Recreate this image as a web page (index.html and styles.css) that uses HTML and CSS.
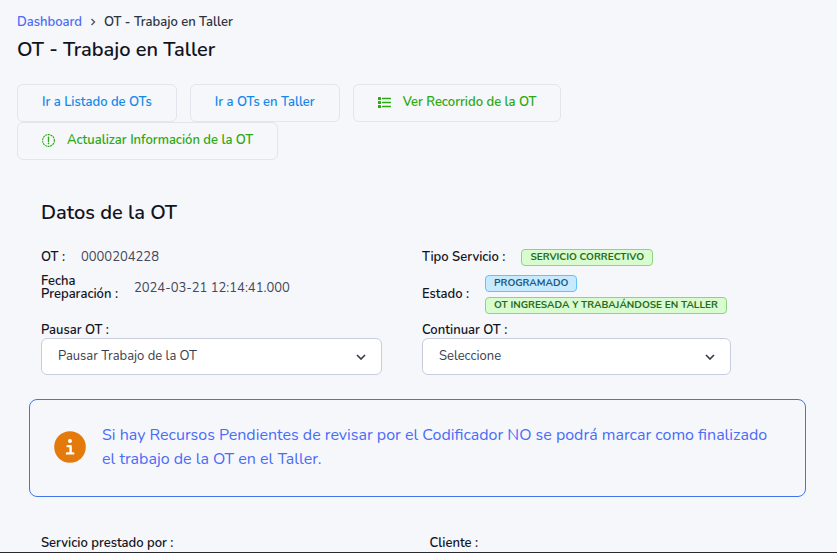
FILE: index.html
```html
<!DOCTYPE html>
<html lang="es">
<head>
    <meta charset="UTF-8">
    <meta name="viewport" content="width=device-width, initial-scale=1.0">
    <title>OT - Trabajo en Taller</title>
    <link rel="stylesheet" href="styles.css">
</head>
<body>
    <header class="page-header">
        <nav class="breadcrumb">
            <a href="#">Dashboard</a>
            <svg class="separator" viewBox="0 0 6 8"><path d="M1.5 1l3 3-3 3"/></svg>
            <span>OT - Trabajo en Taller</span>
        </nav>
        <h1>OT - Trabajo en Taller</h1>
    </header>

    <div class="actions">
        <button type="button" class="btn btn-blue">Ir a Listado de OTs</button>
        <button type="button" class="btn btn-blue">Ir a OTs en Taller</button>
        <button type="button" class="btn btn-green">
            <svg class="btn-icon" viewBox="0 0 13 13">
                <g fill="currentColor">
                    <rect x="0" y="1" width="3" height="3" rx="0.6"/>
                    <rect x="0" y="5" width="3" height="3" rx="0.6"/>
                    <rect x="0" y="9" width="3" height="3" rx="0.6"/>
                    <rect x="4" y="1.7" width="9" height="1.6" rx="0.5"/>
                    <rect x="4" y="5.7" width="9" height="1.6" rx="0.5"/>
                    <rect x="4" y="9.7" width="9" height="1.6" rx="0.5"/>
                </g>
            </svg>
            Ver Recorrido de la OT
        </button>
        <button type="button" class="btn btn-green">
            <svg class="btn-icon" viewBox="0 0 13 13">
                <circle cx="6.5" cy="6.5" r="5.9" fill="none" stroke="currentColor" stroke-width="1.1" stroke-dasharray="2 0.65"/>
                <path d="M6.5 3.2v4.2" fill="none" stroke="currentColor" stroke-width="1.3" stroke-linecap="round"/>
                <circle cx="6.5" cy="9.4" r="0.8" fill="currentColor"/>
            </svg>
            Actualizar Información de la OT
        </button>
    </div>

    <main>
        <section class="details">
            <h2>Datos de la OT</h2>
            <div class="details-grid">
                <dl class="info">
                    <div class="info-row">
                        <dt>OT :</dt>
                        <dd>0000204228</dd>
                    </div>
                    <div class="info-row">
                        <dt>Fecha<br>Preparación :</dt>
                        <dd>2024-03-21 12:14:41.000</dd>
                    </div>
                </dl>
                <dl class="info">
                    <div class="info-row">
                        <dt>Tipo Servicio :</dt>
                        <dd><span class="badge badge-green">SERVICIO CORRECTIVO</span></dd>
                    </div>
                    <div class="info-row">
                        <dt>Estado :</dt>
                        <dd class="badges">
                            <span class="badge badge-blue">PROGRAMADO</span>
                            <span class="badge badge-green">OT INGRESADA Y TRABAJÁNDOSE EN TALLER</span>
                        </dd>
                    </div>
                </dl>
                <div class="field">
                    <label for="pausar">Pausar OT :</label>
                    <div class="select-wrap">
                        <select id="pausar">
                            <option>Pausar Trabajo de la OT</option>
                        </select>
                        <svg class="chevron" viewBox="0 0 10 6"><path d="M1 1l4 4 4-4"/></svg>
                    </div>
                </div>
                <div class="field">
                    <label for="continuar">Continuar OT :</label>
                    <div class="select-wrap">
                        <select id="continuar">
                            <option>Seleccione</option>
                        </select>
                        <svg class="chevron" viewBox="0 0 10 6"><path d="M1 1l4 4 4-4"/></svg>
                    </div>
                </div>
            </div>
        </section>

        <div class="alert" role="alert">
            <svg class="alert-icon" viewBox="0 0 32 32">
                <circle cx="16" cy="16" r="15.8" fill="#e47a0b"/>
                <circle cx="16" cy="10" r="2" fill="#fff"/>
                <path d="M13.6 15.1h3v7M13 22.4h6.2" fill="none" stroke="#fff" stroke-width="2.4" stroke-linecap="round" stroke-linejoin="round"/>
            </svg>
            <p>Si hay Recursos Pendientes de revisar por el Codificador NO se podrá marcar como finalizado el trabajo de la OT en el Taller.</p>
        </div>

        <div class="service">
            <strong>Servicio prestado por :</strong>
            <strong>Cliente :</strong>
        </div>
    </main>
</body>
</html>
```

FILE: styles.css
```css
* {
    box-sizing: border-box;
}

body {
    margin: 0;
    min-height: 100vh;
    padding: 13px 17px 0;
    background-color: #f6f7fb;
    border-bottom: 1px solid #26292e;
    color: #12141d;
    font-family: Nunito, Lato, sans-serif;
    font-size: 13px;
    line-height: 18px;
}

h1,
h2 {
    margin: 0;
    font-size: 20px;
    font-weight: 600;
    line-height: 26px;
}

h1 {
    margin-top: 6px;
}

.breadcrumb {
    display: flex;
    align-items: center;
    gap: 8px;
    color: #2d3240;
    font-weight: 600;
}

.breadcrumb a {
    color: #4a6cf7;
    text-decoration: none;
}

.separator {
    width: 6px;
    height: 8px;
    fill: none;
    stroke: #51586b;
    stroke-width: 1.4;
}

.actions {
    display: flex;
    flex-wrap: wrap;
    column-gap: 13px;
    margin-top: 21px;
}

.btn {
    display: flex;
    align-items: center;
    gap: 12px;
    height: 38px;
    padding: 0 24px 2px;
    background: none;
    border: 1px solid #e4e5ec;
    border-radius: 6px;
    font-family: inherit;
    font-size: 13px;
    font-weight: 600;
    cursor: pointer;
}

.btn-blue {
    color: #1488e8;
}

.btn-green {
    color: #2ba812;
}

.btn-icon {
    width: 13px;
    height: 13px;
}

main {
    padding: 0 14px 0 12px;
}

.details {
    padding: 40px 75px 0 12px;
}

.details-grid {
    display: grid;
    grid-template-columns: minmax(0, 341fr) minmax(0, 309fr);
    column-gap: 40px;
    row-gap: 9px;
    margin-top: 22px;
}

.info {
    display: flex;
    flex-direction: column;
    gap: 9px;
    margin: 0;
}

.info-row {
    display: flex;
    align-items: center;
    gap: 16px;
    min-height: 18px;
}

dt,
label,
.service {
    font-weight: 600;
}

dt {
    flex: none;
    line-height: 13px;
}

dd {
    margin: 0;
    color: #45475a;
}

.badge {
    display: block;
    width: fit-content;
    padding: 0 8px;
    border: 1px solid;
    border-radius: 4px;
    font-size: 10px;
    font-weight: 700;
    line-height: 15px;
    white-space: nowrap;
}

.badges {
    display: flex;
    flex-direction: column;
    gap: 5px;
}

.badge-green {
    background-color: #d9fbd0;
    border-color: #8bd67b;
    color: #276a1b;
}

.badge-blue {
    background-color: #c8eaff;
    border-color: #62c3fa;
    color: #1b5a85;
}

label {
    display: block;
    line-height: 15px;
}

.select-wrap {
    position: relative;
}

select {
    appearance: none;
    display: block;
    width: 100%;
    height: 37px;
    padding: 0 16px 2px;
    background-color: #fff;
    border: 1px solid #c8cddd;
    border-radius: 6px;
    color: #3a3d4c;
    font-family: inherit;
    font-size: 13px;
}

.chevron {
    position: absolute;
    top: 16px;
    right: 16px;
    width: 10px;
    height: 6px;
    fill: none;
    stroke: #33384a;
    stroke-width: 1.6;
    pointer-events: none;
}

.alert {
    display: flex;
    align-items: center;
    gap: 16px;
    margin-top: 24px;
    padding: 23px 24px 25px;
    border: 1px solid #3f76ee;
    border-radius: 8px;
    color: #4a6cf7;
    font-size: 16px;
    line-height: 24px;
}

.alert-icon {
    flex: none;
    width: 32px;
    height: 32px;
}

.alert p {
    margin: 0;
}

.service {
    display: grid;
    grid-template-columns: 1fr 1fr;
    margin-top: 37px;
}

.service strong {
    padding-left: 12px;
    font-weight: inherit;
}
```
